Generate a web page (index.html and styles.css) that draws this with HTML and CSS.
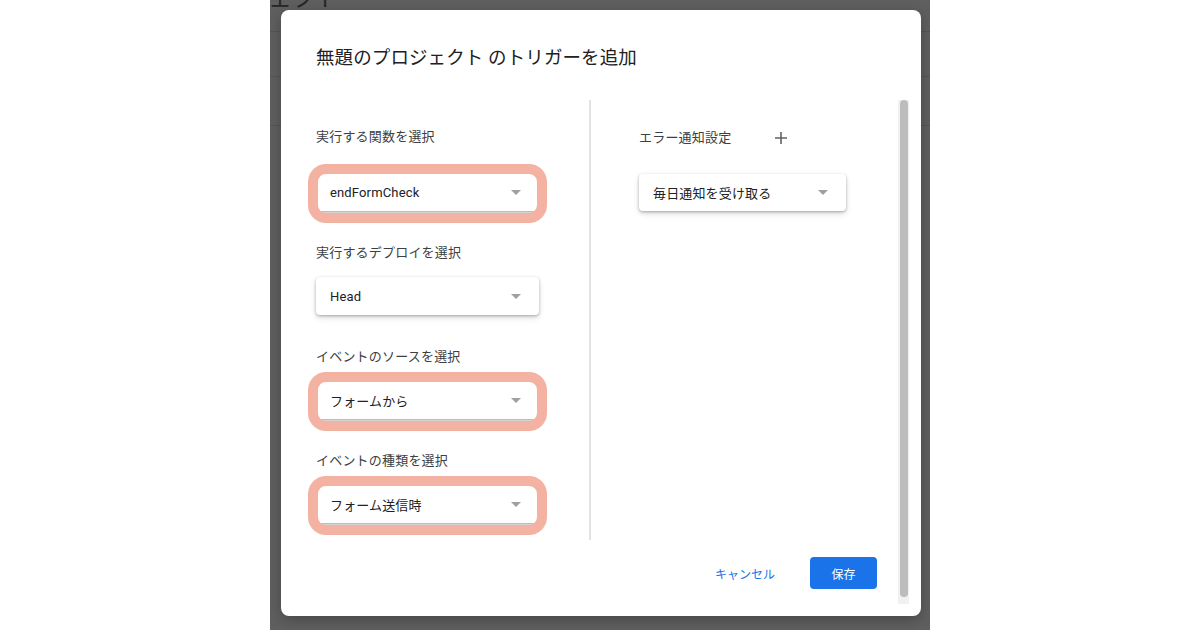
FILE: index.html
```html
<!DOCTYPE html>
<html lang="ja">
<head>
<meta charset="utf-8">
<title>トリガーを追加</title>
<link rel="stylesheet" href="styles.css">
</head>
<body>
<div class="backdrop">
  <div class="page-title">プロジェクト</div>
  <div class="page-row r1"></div>
  <div class="page-row r2"></div>
  <div class="page-row r3"></div>

  <div class="dialog">
    <h1 class="dialog-title">無題のプロジェクト のトリガーを追加</h1>
    <div class="dialog-body">
      <div class="body-main">
        <div class="columns">
          <div class="col-left">
            <div class="field field-first">
              <div class="label">実行する関数を選択</div>
              <div class="select highlighted"><span class="select-text">endFormCheck</span><span class="arrow"></span></div>
            </div>
            <div class="field">
              <div class="label">実行するデプロイを選択</div>
              <div class="select"><span class="select-text">Head</span><span class="arrow"></span></div>
            </div>
            <div class="field">
              <div class="label">イベントのソースを選択</div>
              <div class="select highlighted"><span class="select-text">フォームから</span><span class="arrow"></span></div>
            </div>
            <div class="field">
              <div class="label">イベントの種類を選択</div>
              <div class="select highlighted"><span class="select-text">フォーム送信時</span><span class="arrow"></span></div>
            </div>
          </div>
          <div class="divider"></div>
          <div class="col-right">
            <div class="right-head">
              <span class="label">エラー通知設定</span>
              <button class="icon-btn" aria-label="追加">
                <svg width="14" height="14" viewBox="0 0 14 14"><path d="M7 1v12M1 7h12" stroke="#5f6368" stroke-width="1.6" fill="none"/></svg>
              </button>
            </div>
            <div class="select select-narrow"><span class="select-text">毎日通知を受け取る</span><span class="arrow"></span></div>
          </div>
        </div>
        <div class="footer">
          <button class="btn-text">キャンセル</button>
          <button class="btn-primary">保存</button>
        </div>
      </div>
      <div class="scroll-track"><div class="scroll-thumb"></div></div>
    </div>
  </div>
</div>
</body>
</html>
```

FILE: styles.css
```css
* { box-sizing: border-box; }

html, body {
  margin: 0;
  padding: 0;
  background: #ffffff;
  font-family: Roboto, "Noto Sans CJK JP", "Noto Sans", sans-serif;
}

.backdrop {
  position: relative;
  width: 660px;
  height: 630px;
  margin: 0 auto;
  background: #5f5f5f;
  overflow: hidden;
}

.page-title {
  margin-top: -14px;
  margin-left: -74px;
  height: 24px;
  line-height: 24px;
  font-size: 24px;
  color: #262626;
  white-space: nowrap;
}

.page-row { border-bottom: 1px solid #555555; }
.r1 { height: 22px; }
.r2 { height: 45px; }
.r3 { height: 49px; }

.dialog {
  position: absolute;
  left: 11px;
  top: 10px;
  width: 640px;
  height: 606px;
  background: #ffffff;
  border-radius: 8px;
  box-shadow: 0 4px 14px rgba(0, 0, 0, 0.25);
  display: flex;
  flex-direction: column;
}

.dialog-title {
  margin: 0;
  padding: 36px 35px 0;
  height: 60px;
  font-size: 18.5px;
  line-height: 24px;
  font-weight: 400;
  letter-spacing: 0.1px;
  color: #202124;
}

.dialog-body {
  margin-top: 30px;
  display: flex;
  padding-right: 12px;
  padding-bottom: 12px;
  flex: 1;
}

.body-main {
  flex: 1;
  padding-left: 35px;
  padding-right: 21px;
  display: flex;
  flex-direction: column;
}

.columns {
  display: flex;
  height: 440px;
}

.col-left {
  width: 273px;
  padding-top: 28px;
}

.divider {
  width: 2px;
  background: #e1e2e5;
}

.col-right {
  flex: 1;
  padding-left: 48px;
  padding-top: 26px;
}

.label {
  font-size: 13px;
  line-height: 18px;
  letter-spacing: 0.2px;
  color: #3c4043;
  margin-bottom: 15px;
}

.field + .field { margin-top: 33px; }
.field-first .label { margin-bottom: 27px; }

.select {
  position: relative;
  width: 223px;
  height: 38px;
  background: #ffffff;
  border-radius: 4px;
  box-shadow: 0 1px 3px rgba(0, 0, 0, 0.28), 0 3px 6px rgba(0, 0, 0, 0.12);
  display: flex;
  align-items: center;
  padding: 0 18px 0 14px;
}

.select-narrow {
  width: 207px;
  height: 37px;
}

.select-text {
  flex: 1;
  font-size: 13px;
  color: #202124;
  letter-spacing: 0.15px;
}

.arrow {
  width: 0;
  height: 0;
  border-left: 5px solid transparent;
  border-right: 5px solid transparent;
  border-top: 5px solid #a0a0a0;
}

.highlighted::after {
  content: "";
  position: absolute;
  top: -9px;
  left: -8px;
  right: -8px;
  bottom: -12px;
  border: 10px solid #f4b2a2;
  border-radius: 18px;
}

.right-head {
  display: flex;
  align-items: center;
  height: 24px;
  margin-bottom: 24px;
}

.right-head .label { margin-bottom: 0; }

.icon-btn {
  margin-left: 38px;
  width: 24px;
  height: 24px;
  padding: 0;
  border: 0;
  background: transparent;
  display: flex;
  align-items: center;
  justify-content: center;
}

.footer {
  margin-top: 17px;
  display: flex;
  justify-content: flex-end;
  align-items: center;
  gap: 19px;
}

.btn-text {
  border: 0;
  background: transparent;
  padding: 0 16px;
  height: 32px;
  font-family: inherit;
  font-size: 12px;
  color: #1a73e8;
}

.btn-primary {
  border: 0;
  border-radius: 4px;
  background: #1a73e8;
  color: #ffffff;
  width: 67px;
  height: 32px;
  font-family: inherit;
  font-size: 12px;
}

.scroll-track {
  width: 11px;
  background: #f1f1f1;
  padding-left: 2px;
  padding-right: 1px;
}

.scroll-thumb {
  height: 497px;
  background: #bdbdbd;
  border-radius: 4px;
}
```
